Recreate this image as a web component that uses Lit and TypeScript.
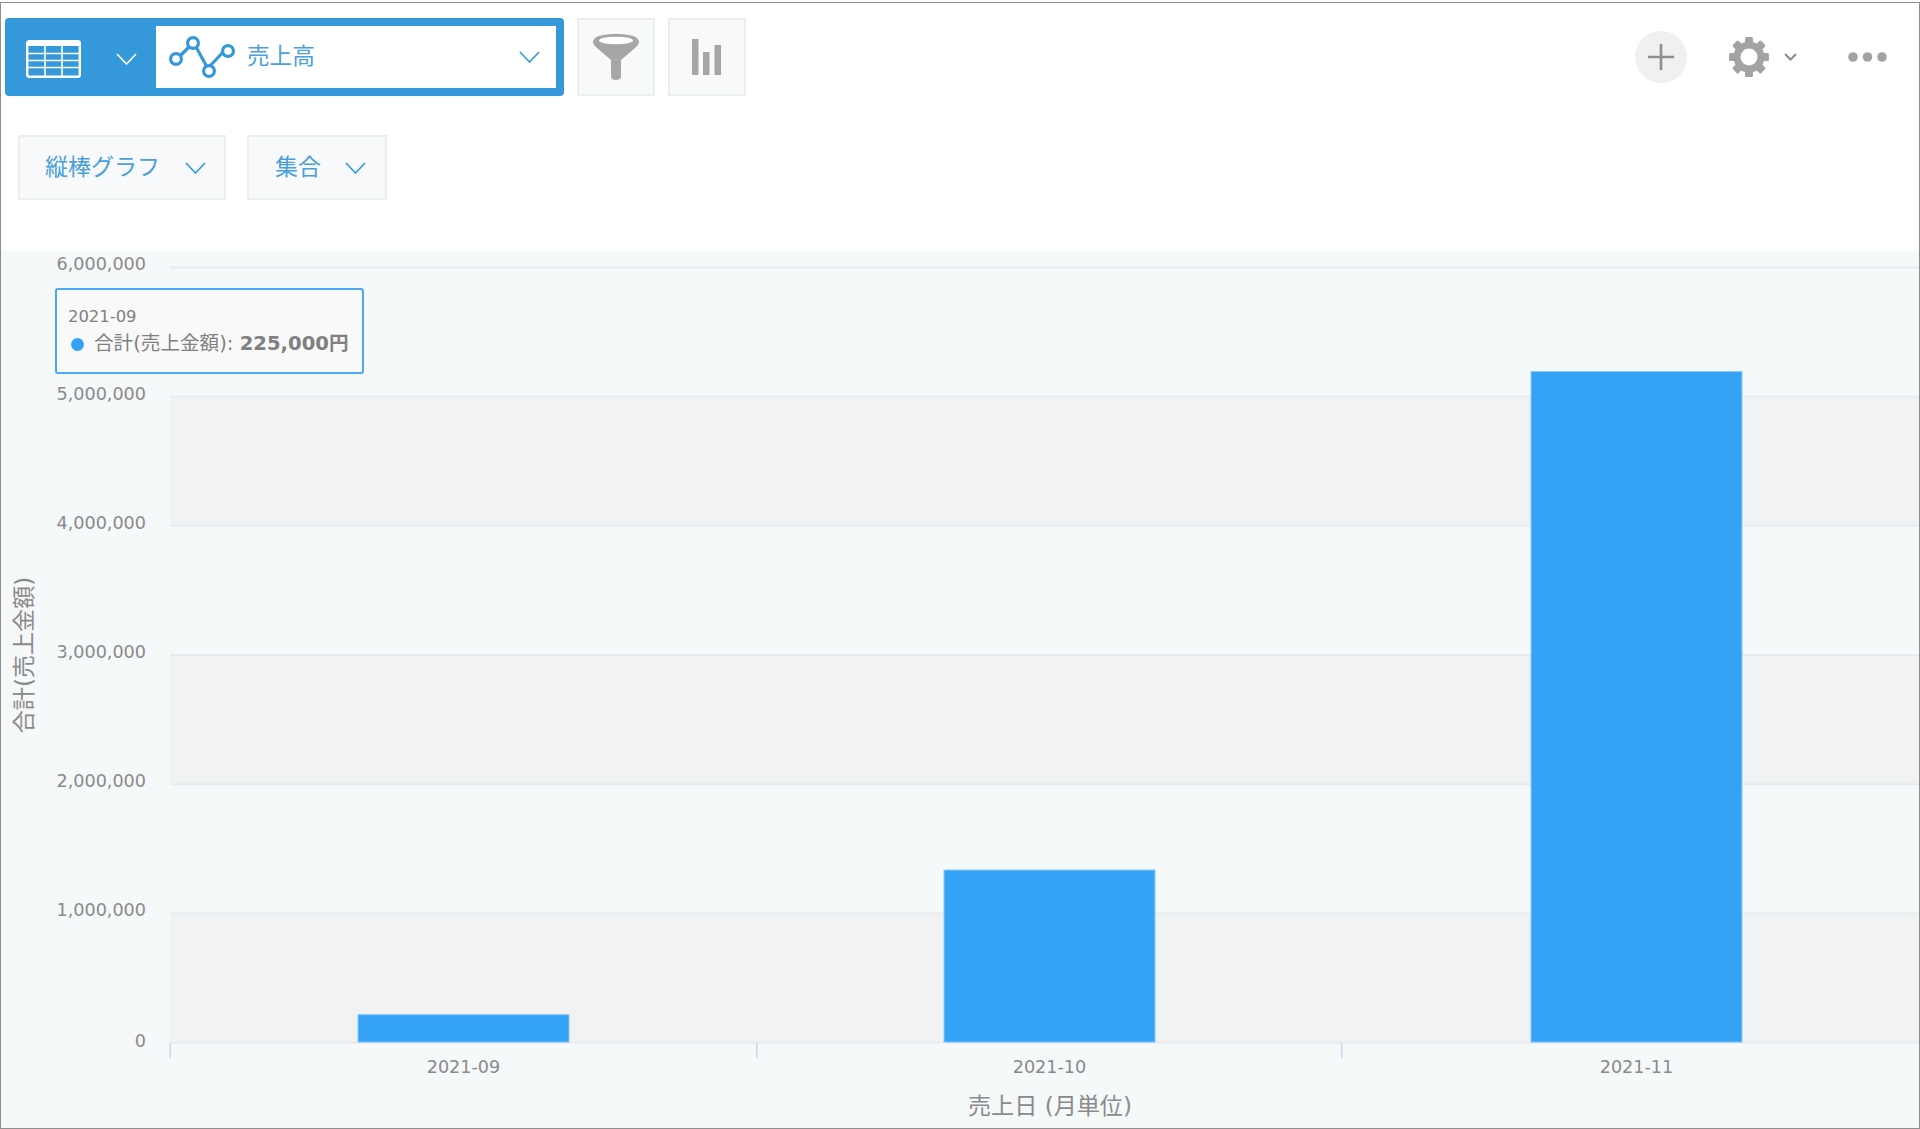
import { LitElement, html, css, svg } from "lit";
import { customElement } from "lit/decorators.js";

const chevron = (color: string, w = 21, h = 12, sw = 1.6) => html`<svg class="chev" width=${w} height=${h} viewBox="0 0 21 12" preserveAspectRatio="none"><path d="M1 1 L10.5 11 L20 1" fill="none" stroke=${color} stroke-width=${sw}/></svg>`;

const PLOT_LEFT = 170;
const PLOT_RIGHT = 1919;
const BASE_Y = 1042.6;
const STEP = 129.2;
const yOf = (v: number) => BASE_Y - (v / 1000000) * STEP;
const ticks = [0, 1, 2, 3, 4, 5, 6];
const data = [
  { label: "2021-09", value: 220000, x: 357.5 },
  { label: "2021-10", value: 1339800, x: 943.5 },
  { label: "2021-11", value: 5198000, x: 1530.5 },
];
const BAR_W = 212;

@customElement("app-root")
export class AppRoot extends LitElement {
  static styles = css`
    :host { display: block; width: 1920px; height: 1129px; background: #fff; overflow: hidden; font-family: "DejaVu Sans", "Noto Sans CJK JP", sans-serif; }
    .frame { box-sizing: border-box; margin-top: 2px; height: 1127px; border: 1px solid #8e8e8e; display: flex; flex-direction: column; background: #fff; }
    .header { height: 248px; box-sizing: border-box; padding: 15px 0 0 4px; flex: none; }
    .row1 { display: flex; align-items: stretch; height: 78px; gap: 13px; }
    .view { width: 559px; box-sizing: border-box; background: #3498db; border-radius: 4px; padding: 8px 8px 8px 0; display: flex; }
    .view-left { width: 151px; flex: none; display: flex; align-items: center; padding-left: 21px; box-sizing: border-box; }
    .view-left > svg:first-child { margin-top: 3px; }
    .view-left .chev { margin-left: 35px; margin-top: 3px; }
    .view-select { flex: 1; background: #fff; display: flex; align-items: center; padding: 0 16px 0 13px; color: #4a9fdc; font-size: 22.6px; font-family: "Noto Sans CJK JP", sans-serif; }
    .view-select span { margin-left: 12px; flex: 1; line-height: 1; margin-top: -3px; }
    .tool { width: 78px; box-sizing: border-box; background: #f7f9fa; border: 2px solid #eaeeef; display: flex; align-items: center; justify-content: center; }
    .right { margin-left: auto; display: flex; align-items: center; padding-right: 32px; }
    .plus { width: 52px; height: 52px; border-radius: 50%; background: #f0f0f0; display: flex; align-items: center; justify-content: center; }
    .gear { margin-left: 42px; }
    .gear-chev { margin-left: 15px; }
    .dots { margin-left: 51px; }
    .row2 { display: flex; gap: 21px; margin: 39px 0 0 13px; }
    .drop { height: 65px; box-sizing: border-box; background: #f7f9fa; border: 2px solid #eaeeef; display: flex; align-items: center; color: #4a9fdc; font-size: 23px; font-family: "Noto Sans CJK JP", sans-serif; }
    .drop span { margin-top: -5px; }
    .drop.kind { width: 208px; padding-left: 25px; }
    .drop.kind .chev { margin-left: 25px; }
    .drop.agg { width: 140px; padding-left: 26px; }
    .drop.agg .chev { margin-left: 24px; }
    .chart { position: relative; flex: 1; background: #f5f9fa; overflow: hidden; }
    .chart svg { display: block; position: absolute; left: 0; top: 0; }
    .axis { font-family: "DejaVu Sans", "Noto Sans CJK JP", sans-serif; fill: #8a8a8a; font-size: 17.6px; }
    .title { font-family: "DejaVu Sans", "Noto Sans CJK JP", sans-serif; fill: #8a8a8a; font-size: 23.1px; }
    .tip { position: absolute; left: 54px; top: 37px; width: 309px; height: 86px; box-sizing: border-box; background: #f9f9f9; border: 2px solid #4ba8f6; border-radius: 3px; padding: 16px 0 0 11px; color: #808080; }
    .tip-date { font-size: 16.4px; line-height: 22px; }
    .tip-line { display: flex; align-items: center; font-size: 19.6px; line-height: 28px; margin-top: 2px; font-family: "DejaVu Sans", "Noto Sans CJK JP", sans-serif; white-space: pre; }
    .tip-dot { width: 13px; height: 13px; border-radius: 50%; background: #33a2f5; margin: 0 10px 0 3px; flex: none; }
    .tip-line b { font-weight: 700; }
  `;

  private gearIcon() {
    const teeth = [0, 45, 90, 135, 180, 225, 270, 315];
    return html`<svg class="gear" width="40" height="40" viewBox="-20 -20 40 40">
      ${teeth.map((a) => svg`<rect x="-4" y="-20" width="8" height="9" rx="1.5" fill="#a3a3a3" transform="rotate(${a})"/>`)}
      <circle r="12" fill="none" stroke="#a3a3a3" stroke-width="7"/>
    </svg>`;
  }

  private chartSvg() {
    const bands = [0, 2, 4];
    return html`<svg width="1918" height="877" viewBox="1 251 1918 877">
      ${bands.map((b) => svg`<rect x=${PLOT_LEFT} y=${yOf((b + 1) * 1000000)} width=${PLOT_RIGHT - PLOT_LEFT} height=${STEP} fill="#f1f2f4"/>`)}
      ${ticks.map((t) => svg`<rect x=${PLOT_LEFT} y=${yOf(t * 1000000) - 1} width=${PLOT_RIGHT - PLOT_LEFT} height="2" fill="#e8ebed"/>`)}
      ${[169.5, 756, 1341].map((x) => svg`<rect x=${x} y="1043" width="1.5" height="15" fill="#ccd6eb"/>`)}
      ${data.map((d) => svg`<rect x=${d.x + 0.5} y=${yOf(d.value) + 0.5} width=${BAR_W - 1} height=${BASE_Y - yOf(d.value) - 1} fill="#35a3f5" stroke="#8cc9f8" stroke-width="1"/>
        <text class="axis" x=${d.x + BAR_W / 2} y="1073" text-anchor="middle">${d.label}</text>`)}
      ${ticks.map((t) => svg`<text class="axis" x="146" y=${t === 0 ? 1047 : yOf(t * 1000000) + 3} text-anchor="end">${t === 0 ? "0" : (t * 1000000).toLocaleString("en-US")}</text>`)}
      <text class="title" transform="translate(32 655) rotate(-90)" text-anchor="middle">合計(売上金額)</text>
      <text class="title" x="1050" y="1114" text-anchor="middle">売上日 (月単位)</text>
    </svg>`;
  }

  render() {
    return html`<div class="frame">
      <div class="header">
        <div class="row1">
          <div class="view">
            <div class="view-left">
              <svg width="55" height="38" viewBox="0 0 55 38">
                <rect x="1.2" y="1.2" width="52.6" height="35.6" rx="2" fill="none" stroke="#fff" stroke-width="2.4"/>
                <rect x="1" y="1" width="53" height="5" fill="#fff"/>
                <path d="M2 13.5H53M2 20.5H53M2 27.5H53M19 5V36M36 5V36" stroke="#fff" stroke-width="1.6" fill="none"/>
              </svg>
              ${chevron("#fff")}
            </div>
            <div class="view-select">
              <svg width="66" height="42" viewBox="0 0 66 42">
                <path d="M8 23 L24 7 M26.5 10 L38 31 M41 30 L57 13" fill="none" stroke="#3498db" stroke-width="3.2"/>
                <circle cx="7" cy="23" r="5.4" fill="#fff" stroke="#3498db" stroke-width="3.2"/>
                <circle cx="24" cy="7" r="5.4" fill="#fff" stroke="#3498db" stroke-width="3.2"/>
                <circle cx="40" cy="35" r="5.4" fill="#fff" stroke="#3498db" stroke-width="3.2"/>
                <circle cx="59" cy="15" r="5.4" fill="#fff" stroke="#3498db" stroke-width="3.2"/>
              </svg>
              <span>売上高</span>
              ${chevron("#3498db")}
            </div>
          </div>
          <div class="tool">
            <svg width="46" height="46" viewBox="0 0 46 46">
              <path d="M0 8 C0 2 10 0 23 0 C36 0 46 2 46 8 C46 10 44 12 42 14 L28 26 V43 C28 47 18 47 18 43 V26 L4 14 C2 12 0 10 0 8 Z" fill="#a6a6a6"/>
              <ellipse cx="23" cy="6.5" rx="17" ry="3.8" fill="#fff"/>
            </svg>
          </div>
          <div class="tool">
            <svg width="30" height="36" viewBox="0 0 30 36">
              <rect x="0" y="0" width="6.5" height="36" fill="#a6a6a6"/>
              <rect x="11" y="13" width="6.5" height="23" fill="#a6a6a6"/>
              <rect x="22.5" y="6" width="6.5" height="30" fill="#a6a6a6"/>
            </svg>
          </div>
          <div class="right">
            <div class="plus">
              <svg width="26" height="26" viewBox="0 0 26 26"><path d="M13 0V26M0 13H26" stroke="#8e8e8e" stroke-width="2.6" fill="none"/></svg>
            </div>
            ${this.gearIcon()}
            <svg class="gear-chev" width="13" height="8" viewBox="0 0 13 8"><path d="M1 1 L6.5 6.5 L12 1" fill="none" stroke="#8a8a8a" stroke-width="2"/></svg>
            <svg class="dots" width="39" height="10" viewBox="0 0 39 10"><circle cx="5" cy="5" r="4.8" fill="#a3a3a3"/><circle cx="19.5" cy="5" r="4.8" fill="#a3a3a3"/><circle cx="34" cy="5" r="4.8" fill="#a3a3a3"/></svg>
          </div>
        </div>
        <div class="row2">
          <div class="drop kind"><span>縦棒グラフ</span>${chevron("#3498db")}</div>
          <div class="drop agg"><span>集合</span>${chevron("#3498db")}</div>
        </div>
      </div>
      <div class="chart">
        ${this.chartSvg()}
        <div class="tip">
          <div class="tip-date">2021-09</div>
          <div class="tip-line"><i class="tip-dot"></i><span>合計(売上金額): </span><b>225,000円</b></div>
        </div>
      </div>
    </div>`;
  }
}
